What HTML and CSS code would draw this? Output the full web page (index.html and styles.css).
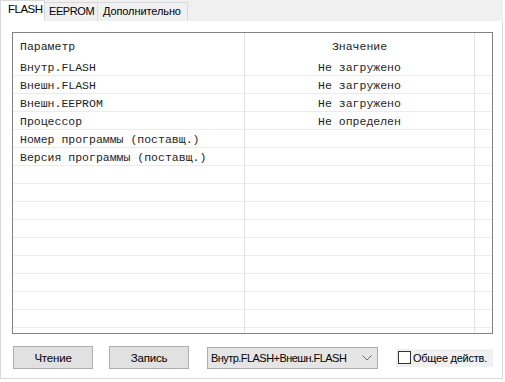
FILE: index.html
```html
<!DOCTYPE html>
<html lang="ru">
<head>
<meta charset="utf-8">
<title>FLASH</title>
<link rel="stylesheet" href="styles.css">
</head>
<body>
<div class="window">
  <div class="tabstrip">
    <div class="tab active">FLASH</div>
    <div class="tab tab-eeprom">EEPROM</div>
    <div class="tab tab-extra">Дополнительно</div>
  </div>
  <div class="panel">
    <div class="grid">
      <div class="cell head">Параметр</div>
      <div class="cell head center">Значение</div>
      <div class="cell head last"></div>

      <div class="cell row">Внутр.FLASH</div>
      <div class="cell row center">Не загружено</div>
      <div class="cell row last"></div>

      <div class="cell row">Внешн.FLASH</div>
      <div class="cell row center">Не загружено</div>
      <div class="cell row last"></div>

      <div class="cell row">Внешн.EEPROM</div>
      <div class="cell row center">Не загружено</div>
      <div class="cell row last"></div>

      <div class="cell row">Процессор</div>
      <div class="cell row center">Не определен</div>
      <div class="cell row last"></div>

      <div class="cell row">Номер программы (поставщ.)</div>
      <div class="cell row center"></div>
      <div class="cell row last"></div>

      <div class="cell row">Версия программы (поставщ.)</div>
      <div class="cell row center"></div>
      <div class="cell row last"></div>

      <div class="cell row"></div><div class="cell row"></div><div class="cell row last"></div>
      <div class="cell row"></div><div class="cell row"></div><div class="cell row last"></div>
      <div class="cell row"></div><div class="cell row"></div><div class="cell row last"></div>
      <div class="cell row"></div><div class="cell row"></div><div class="cell row last"></div>
      <div class="cell row"></div><div class="cell row"></div><div class="cell row last"></div>
      <div class="cell row"></div><div class="cell row"></div><div class="cell row last"></div>
      <div class="cell row"></div><div class="cell row"></div><div class="cell row last"></div>
      <div class="cell row"></div><div class="cell row"></div><div class="cell row last"></div>
      <div class="cell row"></div><div class="cell row"></div><div class="cell row last"></div>
      <div class="cell row"></div><div class="cell row"></div><div class="cell row last"></div>
    </div>
    <div class="actions">
      <button class="btn">Чтение</button>
      <button class="btn btn-write">Запись</button>
      <div class="combo">
        <span class="combo-text">Внутр.FLASH+Внешн.FLASH</span>
        <svg class="chev" width="10" height="6" viewBox="0 0 10 6"><path d="M0.5 0.5 L5 5 L9.5 0.5" fill="none" stroke="#707070" stroke-width="1"/></svg>
      </div>
      <label class="check">
        <span class="box"></span>
        <span class="check-text">Общее действ.</span>
      </label>
    </div>
  </div>
</div>
</body>
</html>
```
FILE: styles.css
```css
* { box-sizing: border-box; }
html, body { margin: 0; padding: 0; background: #ffffff; }
body {
  font-family: "Liberation Sans", Arial, sans-serif;
  font-size: 11px;
  color: #000;
}
.window {
  width: 505px;
  height: 382px;
  background: #ffffff;
}
.tabstrip {
  display: flex;
  align-items: flex-end;
  width: 503px;
  height: 21px;
  background: #f0f0f0;
  position: relative;
  z-index: 1;
}
.tab {
  height: 19px;
  border: 1px solid #d9d9d9;
  border-bottom: none;
  background: #f0f0f0;
  display: flex;
  align-items: center;
  font-size: 11px;
  line-height: 1;
  white-space: nowrap;
  padding-bottom: 1px;
  flex: none;
}
.tab.active {
  width: 45px;
  height: 21px;
  background: #ffffff;
  padding: 0 0 2px 7px;
  letter-spacing: -0.5px;
  font-size: 11.5px;
}
.tab-eeprom {
  width: 53px;
  border-left: none;
  padding-left: 4px;
  letter-spacing: -0.4px;
}
.tab-extra {
  width: 90px;
  border-left: none;
  padding-left: 5px;
  letter-spacing: -0.1px;
}
.panel {
  width: 503px;
  height: 359px;
  margin-top: -1px;
  border: 1px solid #d9d9d9;
  background: #ffffff;
  padding: 11px 0 0 11px;
}
.grid {
  width: 481px;
  height: 302px;
  border: 1px solid #828282;
  display: grid;
  grid-template-columns: 232px 230px 17px;
  grid-auto-rows: 18px;
  grid-template-rows: 25px;
  overflow: hidden;
  font-family: "Liberation Mono", "Courier New", monospace;
  font-size: 11.5px;
  color: #1e1e1e;
  align-content: start;
}
.cell {
  border-right: 1px solid #e3e3e3;
  padding-left: 7px;
  white-space: nowrap;
  overflow: hidden;
  display: flex;
  align-items: center;
}
.cell.head { padding-top: 2px; }
.cell.row { border-bottom: 1px solid #ececec; padding-top: 1px; }
.cell.center { justify-content: center; padding-left: 0; }
.cell.last { border-right: none; }
.actions {
  display: flex;
  align-items: center;
  margin-top: 12px;
  padding-left: 1px;
  height: 23px;
}
.btn {
  width: 80px;
  height: 23px;
  background: #e1e1e1;
  border: 1px solid #adadad;
  font-family: "Liberation Sans", Arial, sans-serif;
  font-size: 11.5px;
  letter-spacing: -0.2px;
  color: #000;
  padding: 0;
  margin: 0;
  flex: none;
}
.btn-write { margin-left: 16px; }
.combo {
  margin-left: 18px;
  width: 171px;
  height: 22px;
  background: #e5e5e5;
  border: 1px solid #adadad;
  display: flex;
  align-items: center;
  justify-content: space-between;
  padding: 0 5px 0 3px;
  font-size: 11px;
  letter-spacing: -0.55px;
  white-space: nowrap;
  flex: none;
}
.chev { display: block; flex: none; }
.check {
  margin-left: 18px;
  width: 97px;
  height: 18px;
  background: #f0f0f0;
  display: flex;
  align-items: center;
  padding-left: 2px;
  font-size: 11px;
  letter-spacing: -0.25px;
  white-space: nowrap;
  flex: none;
}
.box {
  width: 13px;
  height: 13px;
  border: 1px solid #333333;
  background: #ffffff;
  margin-right: 2px;
  flex: none;
}
```
